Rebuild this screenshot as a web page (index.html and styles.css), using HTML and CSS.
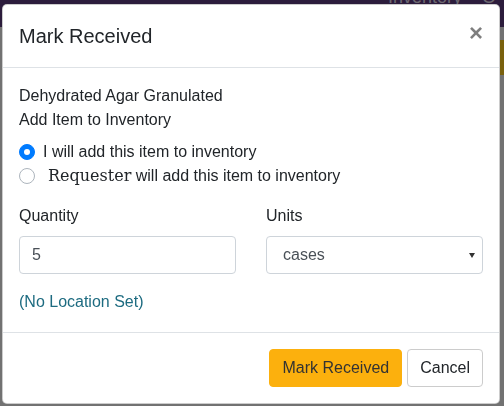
FILE: index.html
```html
<!DOCTYPE html>
<html lang="en">
<head>
    <meta charset="UTF-8">
    <meta name="viewport" content="width=device-width, initial-scale=1.0">
    <title>Mark Received</title>
    <link rel="stylesheet" href="styles.css">
</head>
<body>
    <nav class="navbar">
        <span class="nav-link">Inventory</span>
        <span class="nav-link">O</span>
    </nav>
    <div class="page">
        <div class="page-actions">
            <span class="page-btn"></span>
        </div>
    </div>

    <div class="backdrop"></div>

    <div class="modal">
        <div class="modal-header">
            <h5 class="modal-title">Mark Received</h5>
            <button class="close" type="button">&times;</button>
        </div>

        <div class="modal-body">
            <div>Dehydrated Agar Granulated</div>
            <div class="section-label">Add Item to Inventory</div>

            <label class="radio">
                <span class="radio-dot checked"></span>
                I will add this item to inventory
            </label>
            <label class="radio">
                <span class="radio-dot"></span>
                <span class="who">Requester</span> will add this item to inventory
            </label>

            <div class="row">
                <div class="col">
                    <label class="field-label">Quantity</label>
                    <div class="form-control">5</div>
                </div>
                <div class="col">
                    <label class="field-label">Units</label>
                    <div class="form-control select">cases</div>
                </div>
            </div>

            <a class="location">(No Location Set)</a>
        </div>

        <div class="modal-footer">
            <button class="btn btn-warning" type="button">Mark Received</button>
            <button class="btn btn-default" type="button">Cancel</button>
        </div>
    </div>
</body>
</html>
```

FILE: styles.css
```css
* {
    box-sizing: border-box;
}

body {
    margin: 0;
    font-family: "Liberation Sans", Arial, sans-serif;
    font-size: 16px;
    line-height: 1.5;
    color: #212529;
    background: #e4e4e4;
    height: 406px;
    overflow: hidden;
}

/* page behind the dialog */
.navbar {
    height: 27px;
    background: #583878;
    display: flex;
    justify-content: flex-end;
    gap: 20px;
    padding-right: 8px;
}

.nav-link {
    color: #d8d0e0;
    font-size: 18px;
    line-height: 20px;
    margin-top: -13px;
}

.page-actions {
    display: flex;
    justify-content: flex-end;
    margin-top: 13px;
}

.page-btn {
    width: 30px;
    height: 35px;
    background: #f5c21a;
}

.backdrop {
    position: fixed;
    inset: 0;
    background: rgba(0, 0, 0, 0.5);
}

/* dialog */
.modal {
    position: absolute;
    left: 2px;
    top: 4px;
    width: 498px;
    background: #fff;
    border: 1px solid rgba(0, 0, 0, 0.2);
    border-radius: 5px;
}

.modal-header {
    display: flex;
    align-items: flex-start;
    padding: 16px;
    border-bottom: 1px solid #dee2e6;
}

.modal-title {
    margin: 0;
    font-size: 20px;
    font-weight: normal;
    line-height: 30px;
}

.close {
    margin: -16px -16px -16px auto;
    padding: 16px;
    background: none;
    border: 0;
    font-family: "Liberation Sans", Arial, sans-serif;
    font-size: 24px;
    font-weight: bold;
    line-height: 1;
    color: #000;
    opacity: 0.5;
    text-shadow: 0 1px 0 #fff;
}

.modal-body {
    padding: 16px 16px 18px;
}

.section-label {
    margin-bottom: 8px;
}

.radio {
    display: block;
    position: relative;
    padding-left: 24px;
}

.radio-dot {
    position: absolute;
    left: 0;
    top: 4px;
    width: 16px;
    height: 16px;
    border-radius: 50%;
    border: 1px solid #adb5bd;
    background: #fff;
}

.radio-dot.checked {
    background: #007bff;
    border-color: #007bff;
}

.radio-dot.checked::after {
    content: "";
    position: absolute;
    left: 4px;
    top: 4px;
    width: 6px;
    height: 6px;
    border-radius: 50%;
    background: #fff;
}

.who {
    font-family: "DejaVu Serif", "Liberation Serif", serif;
    margin-left: 5px;
}

.row {
    display: flex;
    gap: 30px;
    margin-top: 16px;
    margin-bottom: 16px;
}

.col {
    flex: 1;
}

.field-label {
    display: block;
    margin-bottom: 8px;
}

.form-control {
    height: 38px;
    padding: 6px 12px;
    border: 1px solid #ced4da;
    border-radius: 4px;
    color: #495057;
}

.form-control.select {
    position: relative;
    padding-left: 16px;
}

.form-control.select::after {
    content: "";
    position: absolute;
    right: 7px;
    top: 16px;
    border-left: 3px solid transparent;
    border-right: 3px solid transparent;
    border-top: 5px solid #333;
}

.location {
    display: block;
    color: #1d6b80;
}

.modal-footer {
    display: flex;
    justify-content: flex-end;
    padding: 16px;
    border-top: 1px solid #dee2e6;
}

.btn {
    height: 38px;
    padding: 6px 12px;
    font-family: "Liberation Sans", Arial, sans-serif;
    font-size: 16px;
    line-height: 24px;
    border-radius: 4px;
    border: 1px solid transparent;
}

.btn + .btn {
    margin-left: 5px;
}

.btn-warning {
    background: #fcb00d;
    border-color: #fcb00d;
    color: #333;
}

.btn-default {
    background: #fff;
    border-color: #ccc;
    color: #212529;
}
```
